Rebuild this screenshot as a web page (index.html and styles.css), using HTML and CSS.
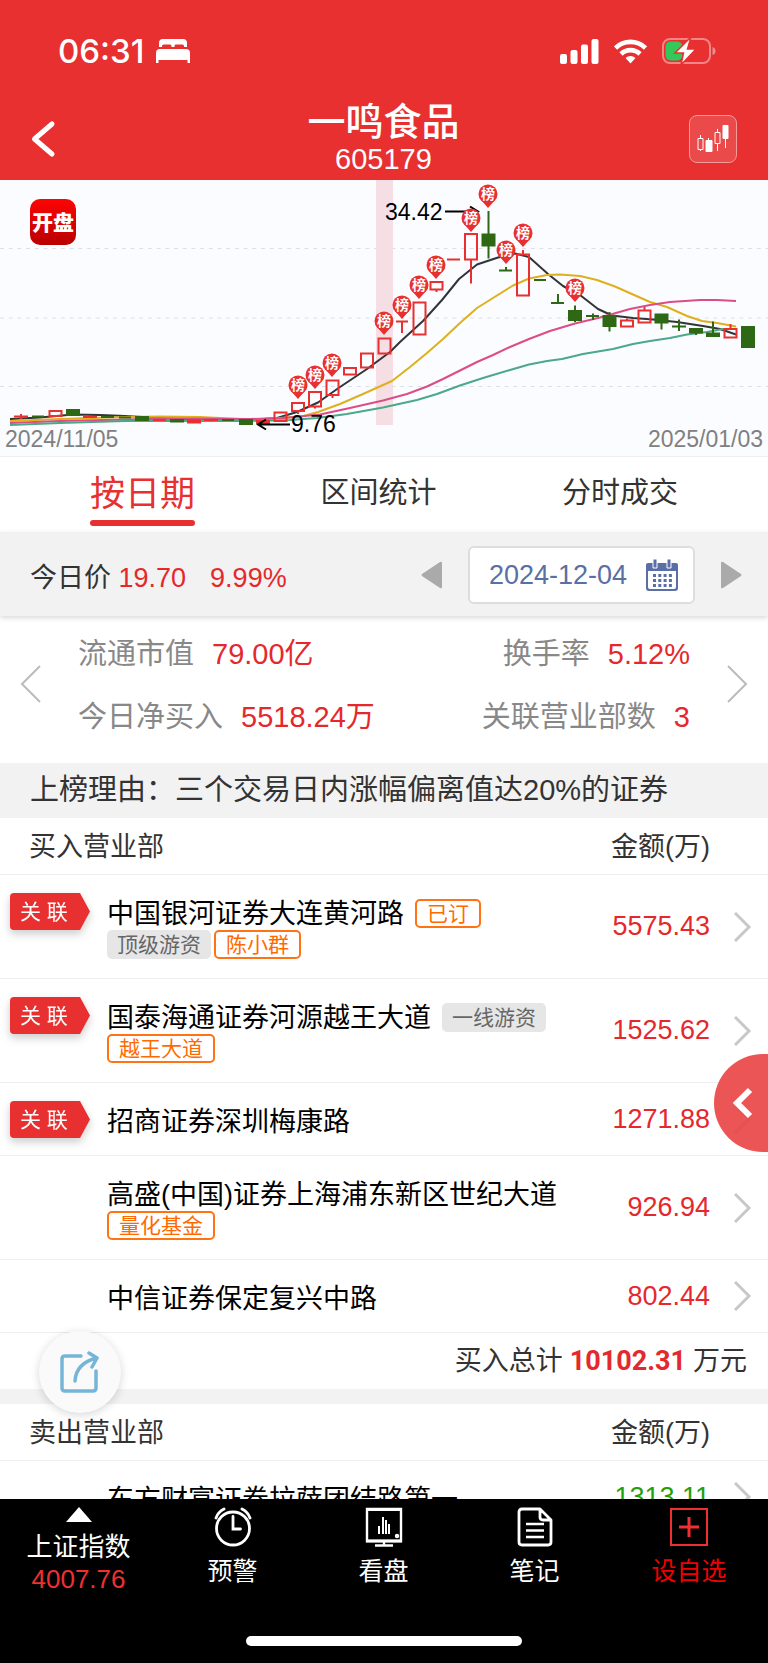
FILE: index.html
```html
<!DOCTYPE html>
<html lang="zh-CN">
<head>
<meta charset="utf-8">
<meta name="viewport" content="width=device-width, initial-scale=1">
<title>一鸣食品 605179</title>
<link rel="stylesheet" href="styles.css">
</head>
<body>
<div class="app">
  <header class="header">
    <div class="status">
      <div class="status-group">
        <span class="time">06:31</span>
        <svg width="34" height="24" viewBox="0 0 34 24" fill="#fff"><path d="M3 8V4a4 4 0 0 1 4-4h20a4 4 0 0 1 4 4v4h-3V7a1.500 1.500 0 0 0-1.500-1.500h-7A1.500 1.500 0 0 0 18.500 7v1h-3V7A1.500 1.500 0 0 0 14 5.500H7.500A1.500 1.500 0 0 0 6 7v1zM0 24V14a4 4 0 0 1 4-4h26a4 4 0 0 1 4 4v10h-2.500v-3h-29v3z"/></svg>
      </div>
      <div class="status-group right">
        <svg width="39" height="25" viewBox="0 0 39 25" fill="#fff"><rect y="15" width="7" height="10" rx="2"/><rect x="10.500" y="11" width="7" height="14" rx="2"/><rect x="21" y="5.500" width="7" height="19.500" rx="2"/><rect x="31.500" width="7" height="25" rx="2"/></svg>
        <svg width="33" height="25" viewBox="0 0 33 25" fill="none" stroke="#fff" stroke-width="4.600"><path d="M1.500 9a21.500 21.500 0 0 1 30 0"/><path d="M7 15a13.500 13.500 0 0 1 19 0"/><path d="M11.500 19a7.500 7.500 0 0 1 10 0l-5 5.500z" fill="#fff" stroke="none"/></svg>
        <svg width="54" height="28" viewBox="0 0 54 28"><rect x="1" y="2" width="47" height="24" rx="7" fill="none" stroke="#fff" stroke-opacity=".42" stroke-width="2"/><path d="M50.500 10v8q3-1 3-4t-3-4z" fill="#fff" fill-opacity=".45"/><rect x="3.500" y="4.500" width="17" height="19" rx="5" fill="#34c759"/><path d="M29 0 13 16h8.500l-2.500 12L34 12h-8.500z" fill="#fff" stroke="#e83030" stroke-width="1.500"/></svg>
      </div>
    </div>
    <div class="titlebar">
      <button class="back" type="button" aria-label="返回"><svg width="26" height="38" viewBox="0 0 26 38" fill="none" stroke="#fff" stroke-width="5" stroke-linecap="round" stroke-linejoin="round"><path d="M22 4 4.500 19 22 34"/></svg></button>
      <div class="title"><h1>一鸣食品</h1><p>605179</p></div>
      <button class="kline" type="button" aria-label="K线"><svg width="32" height="30" viewBox="0 0 32 30" fill="#fff" stroke="#fff"><path d="M3.500 11v16M11.500 14v13M20.500 5v22M28.500 4v20" fill="none"/><path d="M1 14.500h5v11H1z" fill="#eb4a4a"/><path d="M9 16.500h6v11H9z"/><path d="M18 8.500h5v11h-5z" fill="#eb4a4a"/><path d="M26 1.500h5v13h-5z"/></svg></button>
    </div>
  </header>

  <main class="content">
    <svg class="chart" viewBox="0 0 768 276" role="img" aria-label="K线图">
      <defs>
        <linearGradient id="logo" x2="0" y2="1"><stop stop-color="#ff0404"/><stop offset="1" stop-color="#b80000"/></linearGradient>
        <g id="pin"><path d="M-7 6 0 14 7 6z" fill="#e83030"/><circle r="9.500" fill="#e83030"/><text class="pin-text" y="5" text-anchor="middle">榜</text></g>
      </defs>
      <path d="M0 68.500H768M0 138H768M0 206.500H768" stroke="#dcdfe6" stroke-dasharray="4 4.700" fill="none"/>
      <rect x="376" width="17" height="245" fill="#f6dfe4"/>
      <g fill="none" stroke-width="2" stroke-linejoin="round">
        <path stroke="#333438" d="M10 239 40 237.500 73 234.500 100 235 125 236 160 238 200 240 246 240.500 277 238 297 232 318 222.500 340 207 367 189 390 172 400 162 423 141 442 120 459 99 477 84.500 498 77.500 515 73.500 529 77 548 94 563 106 580 115 598 129 612 135.500 633 138 653 139.500 677 142 703 146 720 149 736 154.500"/>
        <path stroke="#deb01c" d="M10 241 60 239 125 237 160 236.500 200 237 250 239.500 300 237 318 232 340 224 363 214 392 201 410 187 427 173 443 159 460 143 477 128 513 105.500 529 98.500 547 95 560 94.500 580 96 597 100 615 106.500 633 114.500 650 122 667 127 687 136 702 141 717 143 736 146.500"/>
        <path stroke="#dc4c86" d="M10 243 60 241 125 239.500 180 238.500 250 239 283 238 320 234.500 350 228 383 220.500 407 214 427 206.500 443 199 460 190.500 477 182 493 175 510 167 529 159 550 151 575 143.500 600 137.500 630 129 650 125 670 122 700 120 717 120 736 121"/>
        <path stroke="#4ba889" d="M10 245 60 243 125 241 250 241 290 240 317 238 347 234 383 227.500 417 220 437 214 460 205.500 483 198 510 190 529 184.500 547 181 562 179 583 174 613 169 633 164 650 161 670 158 687 154.500 707 152 723 149 736 149"/>
      </g>
      <g fill="none" stroke="#e83030" stroke-width="2">
        <path d="M14 236.500h14m-7-2.500v5M83 237h14M153 240h13M204 240h14M447 79.500h13M396 141.500h12m-6 0V153"/>
        <path d="M49.500 231h12v5h-12zM188 241h12v1.500h-12zM257 241h12v2h-12zM274.500 232.500h12v8.500h-12zM292 223h12v8h-12zm6 8v3M309 212h12v14.500h-12zm6 14.500v2M326.500 200.500h12V215h-12zm6 14.500v3M344 188h12v6.500h-12zM361 173.500h12v14h-12zM378.500 158.500h12v15h-12zM413.500 122.500h12v32h-12zM430.500 102h12v7.500h-12zm6 7.500v2.500M465 54h12v25.500h-12zm6 25.500v24M517 74.500h12v41h-12zm6-4.500v4.500M621 140.500h12v6h-12zm6-2v2M638.500 130.500h12v12h-12zm6-3.500v3.500M724.500 149h12v8.500h-12zm6-5v5"/>
      </g>
      <g fill="#2e6814" stroke="#2e6814" stroke-width="2">
        <path d="M32 236.500h12M101 237h13M119 237.500h12M222 240h12M499 90.500h13m-6 0V87M534 100h12M551 123h13m-6 0v-9M586 136h13m-6-2.500v6.500M672 146.500h14m-7-7V151"/>
        <path d="M67 230h12v5H67zM136 237h12v3h-12zM171 240h12v1.500h-12zM240 240h12v4h-12zM482.500 54.500h12v11h-12zm6-23.500v47.500M569 131h12v9h-12zm6-5.500v16.500M603.500 136h12v10h-12zm6-4v19.500M655.500 134.500h12v8h-12zm6 0v15M690 149h12v3.500h-12zm6 0v6M707 153.500h12v2.500h-12zm6-12v12M742 147h12v20h-12z"/>
      </g>
      <g fill="none" stroke="#000" stroke-width="2"><path d="M445 31.500h33m-8-5 8 5-8 5M290 244.500h-32m8-5-8 5 8 5"/></g>
      <use href="#pin" x="298" y="205"/><use href="#pin" x="315" y="195"/><use href="#pin" x="332" y="183"/><use href="#pin" x="384" y="141"/><use href="#pin" x="402" y="125"/><use href="#pin" x="419" y="105"/><use href="#pin" x="436" y="85"/><use href="#pin" x="471" y="38"/><use href="#pin" x="488" y="14"/><use href="#pin" x="506" y="70"/><use href="#pin" x="523" y="53"/><use href="#pin" x="575" y="108"/>
      <text class="price-label" x="385" y="40">34.42</text>
      <text class="price-label" x="291" y="252">9.76</text>
      <text class="date-label" x="5" y="267">2024/11/05</text>
      <text class="date-label" x="763" y="267" text-anchor="end">2025/01/03</text>
      <rect x="30" y="19" width="46" height="46" rx="10" fill="url(#logo)"/>
      <text class="logo-text" x="53" y="50" text-anchor="middle">开盘</text>
    </svg>

    <nav class="tabs">
      <button class="tab active" type="button">按日期</button>
      <button class="tab" type="button">区间统计</button>
      <button class="tab" type="button">分时成交</button>
    </nav>

    <section class="daybar">
      <p class="today">今日价 <b>19.70</b><b class="pct">9.99%</b></p>
      <button class="step" type="button" aria-label="前一天"><svg width="22" height="28" viewBox="0 0 22 28" fill="#aaa"><path d="M21 2v24q0 2-2 1L1 15q-1-1 0-2L19 1q2-1 2 1z"/></svg></button>
      <button class="date" type="button">2024-12-04
        <svg width="32" height="32" viewBox="0 0 32 32" fill="#5a6fa5"><path d="M2 4h28q2 0 2 2v23q0 3-3 3H3q-3 0-3-3V6q0-2 2-2zm0 8v16q0 2 2 2h24q2 0 2-2V12z" fill-rule="evenodd"/><path d="M7 0h4v9H7zM21 0h4v9h-4z" stroke="#fff"/><path d="M7 16.500h19M7 21.500h19M7 26.500h19" stroke="#5a6fa5" stroke-width="3" stroke-dasharray="3 2.300"/></svg>
      </button>
      <button class="step" type="button" aria-label="后一天"><svg width="22" height="28" viewBox="0 0 22 28" fill="#aaa"><path d="M1 2v24q0 2 2 1l18-12q1-1 0-2L3 1Q1 0 1 2z"/></svg></button>
    </section>

    <section class="stats">
      <button class="page" type="button" aria-label="上一页"><svg width="22" height="38" viewBox="0 0 22 38" fill="none" stroke="#bbb" stroke-width="2"><path d="M20 1 2 19l18 18"/></svg></button>
      <dl class="stats-grid">
        <div><dt>流通市值</dt><dd>79.00亿</dd></div>
        <div><dt>换手率</dt><dd>5.12%</dd></div>
        <div><dt>今日净买入</dt><dd>5518.24万</dd></div>
        <div><dt>关联营业部数</dt><dd>3</dd></div>
      </dl>
      <button class="page" type="button" aria-label="下一页"><svg width="22" height="38" viewBox="0 0 22 38" fill="none" stroke="#bbb" stroke-width="2"><path d="m2 1 18 18L2 37"/></svg></button>
    </section>

    <p class="reason">上榜理由：三个交易日内涨幅偏离值达20%的证券</p>

    <table class="offices">
      <colgroup><col class="c-badge"><col><col class="c-amount"><col class="c-go"></colgroup>
      <thead><tr><th colspan="2">买入营业部</th><th class="amount-head">金额(万)</th><th></th></tr></thead>
      <tbody>
        <tr><td class="badge-cell"><span class="badge"><span>关 联</span></span></td><td class="name-cell"><div class="names"><span class="name">中国银河证券大连黄河路</span><span class="tag">已订</span><span class="tag gray">顶级游资</span><span class="tag">陈小群</span></div></td><td class="amount">5575.43</td><td class="go"><svg width="18" height="30" viewBox="0 0 18 30"><path d="m1 1 14 14L1 29"/></svg></td></tr>
        <tr><td class="badge-cell"><span class="badge"><span>关 联</span></span></td><td class="name-cell"><div class="names"><span class="name">国泰海通证券河源越王大道</span><span class="tag gray">一线游资</span><span class="tag">越王大道</span></div></td><td class="amount">1525.62</td><td class="go"><svg width="18" height="30" viewBox="0 0 18 30"><path d="m1 1 14 14L1 29"/></svg></td></tr>
        <tr><td class="badge-cell"><span class="badge"><span>关 联</span></span></td><td class="name-cell"><div class="names"><span class="name">招商证券深圳梅康路</span></div></td><td class="amount">1271.88</td><td class="go"><svg width="18" height="30" viewBox="0 0 18 30"><path d="m1 1 14 14L1 29"/></svg></td></tr>
        <tr><td></td><td class="name-cell"><div class="names"><span class="name">高盛(中国)证券上海浦东新区世纪大道</span><span class="tag">量化基金</span></div></td><td class="amount">926.94</td><td class="go"><svg width="18" height="30" viewBox="0 0 18 30"><path d="m1 1 14 14L1 29"/></svg></td></tr>
        <tr><td></td><td class="name-cell"><div class="names"><span class="name">中信证券保定复兴中路</span></div></td><td class="amount">802.44</td><td class="go"><svg width="18" height="30" viewBox="0 0 18 30"><path d="m1 1 14 14L1 29"/></svg></td></tr>
      </tbody>
    </table>
    <p class="total">买入总计<strong>10102.31</strong>万元</p>

    <table class="offices sell">
      <colgroup><col class="c-badge"><col><col class="c-amount"><col class="c-go"></colgroup>
      <thead><tr><th colspan="2">卖出营业部</th><th class="amount-head">金额(万)</th><th></th></tr></thead>
      <tbody>
        <tr><td></td><td class="name-cell"><div class="names"><span class="name">东方财富证券拉萨团结路第一</span></div></td><td class="amount">1313.11</td><td class="go"><svg width="18" height="30" viewBox="0 0 18 30"><path d="m1 1 14 14L1 29"/></svg></td></tr>
      </tbody>
    </table>
  </main>

  <footer class="bottom">
    <nav class="bottom-nav">
      <button class="item index" type="button"><svg width="26" height="15" viewBox="0 0 26 15"><path d="M13 0 26 15H0z" fill="#fff"/></svg><span>上证指数</span><span class="quote">4007.76</span></button>
      <button class="item" type="button"><svg width="38" height="40" viewBox="0 0 38 40" fill="none" stroke="#fff" stroke-width="2.800" stroke-linecap="round"><circle cx="19" cy="21.500" r="16.500"/><path d="M19 9.500V22h7.500M2 11q2-6 8-9M36 11q-2-6-8-9"/></svg><span>预警</span></button>
      <button class="item" type="button"><svg width="38" height="40" viewBox="0 0 38 40" fill="none" stroke="#fff" stroke-width="2.400"><path d="M2 2h34v32H2zM19 34v4M10 38.500h18"/><path d="M1 2.500h36M1 34h36" stroke-width="3"/><path d="M14 19v8M18 10v17M21 13v14M24 17v10" stroke-width="2"/><circle cx="32" cy="29" r="1"/></svg><span>看盘</span></button>
      <button class="item" type="button"><svg width="38" height="40" viewBox="0 0 38 40" fill="none" stroke="#fff" stroke-width="2.800" stroke-linejoin="round"><path d="M24 2H6Q3 2 3 5v30q0 3 3 3h26q3 0 3-3V13zM24 2v8q0 3 3 3h8"/><path d="M10 17h18M10 23.500h18M10 30h18" stroke-width="2.400"/></svg><span>笔记</span></button>
      <button class="item add" type="button"><svg width="38" height="40" viewBox="0 0 38 40" fill="none" stroke="#f03030" stroke-width="2"><path d="M1 2h36v36H1z"/><path d="M19 10v20M9 20h20" stroke-width="3"/></svg><span>设自选</span></button>
    </nav>
    <div class="home"></div>
  </footer>

  <button class="drawer" type="button" aria-label="展开"><svg width="22" height="32" viewBox="0 0 22 32" fill="none" stroke="#fff" stroke-width="6"><path d="M18 3 5 16l13 13"/></svg></button>
  <button class="share" type="button" aria-label="分享"><svg width="40" height="42" viewBox="0 0 40 42" fill="none" stroke="#75b5d8" stroke-width="3.500" stroke-linecap="round" stroke-linejoin="round"><path d="M21 5H5Q2 5 2 8v29q0 3 3 3h28q3 0 3-3V20M15 30Q16 12 37 7M29 2l8 5-5 9"/></svg></button>
</div>
</body>
</html>
```

FILE: styles.css
```css
* { box-sizing: border-box; }

body, h1, p, dl, dd { margin: 0; }

body {
  font-family: "Liberation Sans", "Noto Sans CJK SC", sans-serif;
  font-size: 27px;
  color: #333;
  background: #fff;
}

button {
  padding: 0;
  border: 0;
  background: none;
  color: inherit;
  font: inherit;
  cursor: pointer;
}

svg { display: block; flex: none; }

.app {
  position: relative;
  display: flex;
  flex-direction: column;
  height: 100vh;
  overflow: hidden;
}

/* Header */
.header {
  flex: none;
  background: #e83030;
  color: #fff;
}

.status {
  display: flex;
  justify-content: space-between;
  align-items: center;
  height: 102px;
  padding: 0 52px 0 58px;
}

.status-group { display: flex; align-items: center; gap: 12px; }
.status-group.right { gap: 15px; }

.time { font: 500 33px/40px Inter, sans-serif; }

.titlebar {
  display: grid;
  grid-template-columns: 1fr auto 1fr;
  align-items: center;
  height: 78px;
  padding: 0 31px 10px 30px;
}

.back { justify-self: start; }
.title { text-align: center; }
.title h1 { font-size: 38px; font-weight: 500; line-height: 40px; }
.title p { font-size: 29px; line-height: 34px; }

.kline {
  display: grid;
  place-items: center;
  justify-self: end;
  width: 48px;
  height: 48px;
  border: 1px solid #f39a9a;
  border-radius: 8px;
  background: #eb4a4a;
}

.content {
  flex: 1;
  min-height: 0;
  overflow-y: auto;
  scrollbar-width: none;
}

/* Chart */
.chart {
  width: 100%;
  background: #fbfcff;
}

.pin-text { fill: #fff; font-size: 14px; font-weight: 700; }
.price-label { fill: #000; font-size: 23px; }
.date-label { fill: #808080; font-size: 23px; }
.logo-text { fill: #fff; font-size: 21px; font-weight: 900; }

/* Tabs */
.tabs {
  display: flex;
  justify-content: space-between;
  height: 76px;
  padding: 0 90px;
  border-top: 1px solid #eee;
}

.tab {
  height: 69px;
  font-size: 29px;
  line-height: 73px;
}

.tab.active {
  position: relative;
  color: #e83030;
  font-size: 35px;
}

.tab.active::after {
  content: "";
  position: absolute;
  right: 0;
  bottom: 0;
  left: 0;
  height: 6px;
  border-radius: 3px;
  background: #e83030;
}

/* Price and date */
.daybar {
  position: relative;
  display: flex;
  align-items: center;
  gap: 25px;
  height: 84px;
  padding: 2px 26px 0 30px;
  background: #f2f2f2;
  box-shadow: 0 2px 5px rgba(0, 0, 0, .15);
}

.today { flex: 1; }
.today b { color: #e5282c; font-weight: 400; }
.today .pct { margin-left: 24px; }

.date {
  display: flex;
  align-items: center;
  gap: 19px;
  height: 58px;
  padding: 0 15px 0 19px;
  border: 2px solid #ddd;
  border-radius: 6px;
  background: #fff;
  color: #5a6fa5;
}

/* Key figures */
.stats {
  display: flex;
  align-items: center;
  justify-content: space-between;
  height: 147px;
  padding: 0 20px 12px;
  font-size: 29px;
}

.stats-grid {
  flex: 1;
  display: grid;
  grid-template-columns: auto auto;
  justify-content: space-between;
  row-gap: 24px;
  padding: 4px 36px 0;
  line-height: 39px;
}

.stats-grid div { display: flex; gap: 18px; }
.stats-grid div:nth-child(even) { justify-content: flex-end; }
.stats-grid dt { color: #888; }
.stats-grid dd { color: #e5282c; }

.reason {
  padding: 0 30px;
  background: #f2f2f2;
  font-size: 29px;
  line-height: 55px;
}

/* Branch office tables */
.offices {
  width: 100%;
  border-spacing: 0;
  table-layout: fixed;
}

.c-badge { width: 107px; }
.c-amount { width: 140px; }
.c-go { width: 58px; }

.offices th {
  height: 57px;
  padding: 0 0 3px 29px;
  border-bottom: 1px solid #eee;
  font-weight: 400;
  text-align: left;
}

.offices .amount-head { padding: 0 0 3px; text-align: right; }

.offices td {
  padding: 0;
  border-bottom: 1px solid #eee;
}

.offices .badge-cell { padding: 18px 0 0 10px; vertical-align: top; }

.badge {
  display: block;
  width: 80px;
  filter: drop-shadow(0 4px 4px rgba(0, 0, 0, .2));
}

.badge span {
  display: block;
  padding-left: 10px;
  border-radius: 4px;
  background: #e83030;
  clip-path: polygon(0 0, 70px 0, 100% 50%, 70px 100%, 0 100%);
  color: #fff;
  font-size: 21px;
  line-height: 37px;
}

.offices .name-cell { padding: 24px 0 17px; }

.names {
  display: flex;
  flex-wrap: wrap;
  align-items: center;
  line-height: 31px;
}

.name {
  margin-right: 11px;
  color: #000;
  white-space: nowrap;
}

.tag {
  height: 29px;
  margin: 0 3px 2px 0;
  padding: 0 10px;
  border: 2px solid #ff7314;
  border-radius: 5px;
  color: #ff6a00;
  font-size: 21px;
  line-height: 25px;
}

.tag.gray {
  padding: 0 8px;
  border-color: #e6e6e6;
  background: #e6e6e6;
  color: #666;
}

.amount { color: #e5282c; text-align: right; }
.sell .amount { color: #1fa010; }

.go svg {
  margin-left: 24px;
  fill: none;
  stroke: #c8c8c8;
  stroke-width: 3px;
}

.total {
  padding-right: 21px;
  border-bottom: 15px solid #f2f2f2;
  line-height: 56px;
  text-align: right;
}

.total strong {
  margin: 0 7px;
  color: #e5282c;
  font-family: Roboto, sans-serif;
}

/* Bottom navigation */
.bottom {
  display: flex;
  flex: none;
  flex-direction: column;
  align-items: center;
  justify-content: space-between;
  height: 164px;
  padding: 8px 0 17px;
  background: #000;
  color: #fff;
}

.bottom-nav {
  display: grid;
  grid-template-columns: 157fr 151fr 151fr 151fr 158fr;
  width: 100%;
}

.item {
  display: flex;
  flex-direction: column;
  align-items: center;
  gap: 8px;
  font-size: 25px;
  line-height: 32px;
}

.index { gap: 0; font-size: 26px; }
.index svg { margin-bottom: 9px; }
.quote { color: #f03030; }
.add { color: #f00000; }

.home {
  width: 36%;
  height: 10px;
  border-radius: 5px;
  background: #fff;
}

/* Floating controls */
.drawer {
  position: absolute;
  right: 0;
  bottom: 511px;
  display: flex;
  align-items: center;
  width: 54px;
  height: 98px;
  padding-left: 18px;
  border-radius: 49px 0 0 49px;
  background: rgba(234, 66, 68, .9);
}

.share {
  position: absolute;
  bottom: 250px;
  left: 39px;
  display: grid;
  place-items: center;
  width: 82px;
  height: 82px;
  border-radius: 50%;
  background: #fafafa;
  box-shadow: 0 2px 10px rgba(0, 0, 0, .16);
}
```
